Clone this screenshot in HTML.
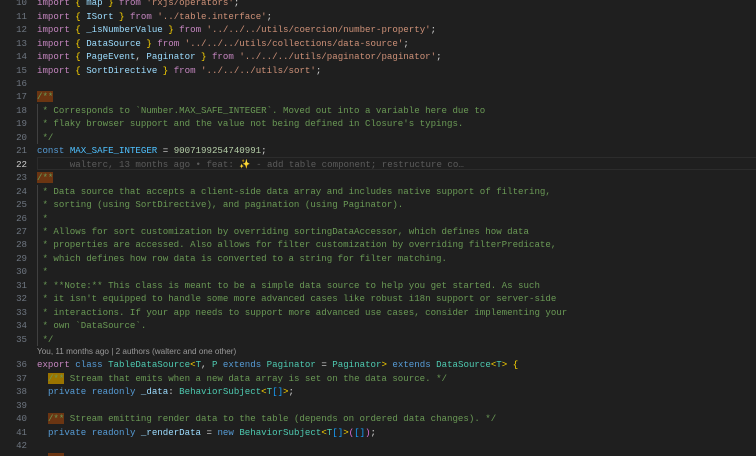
<!DOCTYPE html>
<html><head><meta charset="utf-8"><style>
html,body{margin:0;padding:0;background:#1f1f1f;width:756px;height:456px;overflow:hidden}
.l{position:absolute;left:0;height:13.45px;line-height:13.45px;font-family:"Liberation Mono",monospace;font-size:9.12px;white-space:pre;color:#d4d4d4;width:756px}
.n{position:absolute;left:0;width:27px;text-align:right;color:#6e7681}
.c{position:absolute;left:37px}
.k{color:#c586c0}.b{color:#ffd700}.v{color:#9cdcfe}.s{color:#ce9178}.cm{color:#6a9955}.bl{color:#569cd6}.cn{color:#4fc1ff}.nu{color:#b5cea8}.t{color:#4ec9b0}.p{color:#da70d6}.bb{color:#179fff}
.hb{background:#6b3512}.hy{background:#9a7400}
.g{position:absolute;left:37px;width:1px;background:#404040}
</style></head><body>
<div class="l" style="top:-3.7px"><span class="n">10</span><span class="c"><span class="k">import</span> <span class="b">{</span> <span class="v">map</span> <span class="b">}</span> <span class="k">from</span> <span class="s">'rxjs/operators'</span>;</span></div>
<div class="l" style="top:9.75px"><span class="n">11</span><span class="c"><span class="k">import</span> <span class="b">{</span> <span class="v">ISort</span> <span class="b">}</span> <span class="k">from</span> <span class="s">'../table.interface'</span>;</span></div>
<div class="l" style="top:23.2px"><span class="n">12</span><span class="c"><span class="k">import</span> <span class="b">{</span> <span class="v">_isNumberValue</span> <span class="b">}</span> <span class="k">from</span> <span class="s">'../../../utils/coercion/number-property'</span>;</span></div>
<div class="l" style="top:36.65px"><span class="n">13</span><span class="c"><span class="k">import</span> <span class="b">{</span> <span class="v">DataSource</span> <span class="b">}</span> <span class="k">from</span> <span class="s">'../../../utils/collections/data-source'</span>;</span></div>
<div class="l" style="top:50.1px"><span class="n">14</span><span class="c"><span class="k">import</span> <span class="b">{</span> <span class="v">PageEvent</span>, <span class="v">Paginator</span> <span class="b">}</span> <span class="k">from</span> <span class="s">'../../../utils/paginator/paginator'</span>;</span></div>
<div class="l" style="top:63.55px"><span class="n">15</span><span class="c"><span class="k">import</span> <span class="b">{</span> <span class="v">SortDirective</span> <span class="b">}</span> <span class="k">from</span> <span class="s">'../../../utils/sort'</span>;</span></div>
<div class="l" style="top:77px"><span class="n">16</span></div>
<div class="l" style="top:90.45px"><span class="n">17</span><span class="c cm"><span class="hb">/**</span></span></div>
<div class="l" style="top:103.9px"><span class="n">18</span><span class="c cm"> * Corresponds to `Number.MAX_SAFE_INTEGER`. Moved out into a variable here due to</span></div>
<div class="l" style="top:117.35px"><span class="n">19</span><span class="c cm"> * flaky browser support and the value not being defined in Closure's typings.</span></div>
<div class="l" style="top:130.8px"><span class="n">20</span><span class="c cm"> */</span></div>
<div class="l" style="top:144.25px"><span class="n">21</span><span class="c"><span class="bl">const</span> <span class="cn">MAX_SAFE_INTEGER</span> = <span class="nu">9007199254740991</span>;</span></div>
<div style="position:absolute;left:37px;top:157.2px;width:719px;height:12.5px;border:1px solid #2c2c2c;border-right:none;box-sizing:border-box"></div>
<div class="l" style="top:157.7px"><span class="n" style="color:#ccc">22</span><span class="c" style="color:#5c5c5c">      walterc, 13 months ago • feat: <span style="color:#a88c3a">✨</span> - add table component; restructure co…</span></div>
<div class="l" style="top:171.15px"><span class="n">23</span><span class="c cm"><span class="hb">/**</span></span></div>
<div class="l" style="top:184.6px"><span class="n">24</span><span class="c cm"> * Data source that accepts a client-side data array and includes native support of filtering,</span></div>
<div class="l" style="top:198.05px"><span class="n">25</span><span class="c cm"> * sorting (using SortDirective), and pagination (using Paginator).</span></div>
<div class="l" style="top:211.5px"><span class="n">26</span><span class="c cm"> *</span></div>
<div class="l" style="top:224.95px"><span class="n">27</span><span class="c cm"> * Allows for sort customization by overriding sortingDataAccessor, which defines how data</span></div>
<div class="l" style="top:238.4px"><span class="n">28</span><span class="c cm"> * properties are accessed. Also allows for filter customization by overriding filterPredicate,</span></div>
<div class="l" style="top:251.85px"><span class="n">29</span><span class="c cm"> * which defines how row data is converted to a string for filter matching.</span></div>
<div class="l" style="top:265.3px"><span class="n">30</span><span class="c cm"> *</span></div>
<div class="l" style="top:278.75px"><span class="n">31</span><span class="c cm"> * **Note:** This class is meant to be a simple data source to help you get started. As such</span></div>
<div class="l" style="top:292.2px"><span class="n">32</span><span class="c cm"> * it isn't equipped to handle some more advanced cases like robust i18n support or server-side</span></div>
<div class="l" style="top:305.65px"><span class="n">33</span><span class="c cm"> * interactions. If your app needs to support more advanced use cases, consider implementing your</span></div>
<div class="l" style="top:319.1px"><span class="n">34</span><span class="c cm"> * own `DataSource`.</span></div>
<div class="l" style="top:332.55px"><span class="n">35</span><span class="c cm"> */</span></div>
<div style="position:absolute;left:37px;top:347px;font-family:'Liberation Sans',sans-serif;font-size:8.2px;color:#999;white-space:pre">You, 11 months ago | 2 authors (walterc and one other)</div>
<div class="l" style="top:358.3px"><span class="n">36</span><span class="c"><span class="k">export</span> <span class="bl">class</span> <span class="t">TableDataSource</span><span class="b">&lt;</span><span class="t">T</span>, <span class="t">P</span> <span class="bl">extends</span> <span class="t">Paginator</span> = <span class="t">Paginator</span><span class="b">&gt;</span> <span class="bl">extends</span> <span class="t">DataSource</span><span class="b">&lt;</span><span class="t">T</span><span class="b">&gt;</span> <span class="b">{</span></span></div>
<div class="l" style="top:371.75px"><span class="n">37</span><span class="c cm">  <span class="hy">/**</span> Stream that emits when a new data array is set on the data source. */</span></div>
<div class="l" style="top:385.2px"><span class="n">38</span><span class="c">  <span class="bl">private</span> <span class="bl">readonly</span> <span class="v">_data</span>: <span class="t">BehaviorSubject</span><span class="b">&lt;</span><span class="t">T</span><span class="bb">[]</span><span class="b">&gt;</span>;</span></div>
<div class="l" style="top:398.65px"><span class="n">39</span></div>
<div class="l" style="top:412.1px"><span class="n">40</span><span class="c cm">  <span class="hb">/**</span> Stream emitting render data to the table (depends on ordered data changes). */</span></div>
<div class="l" style="top:425.55px"><span class="n">41</span><span class="c">  <span class="bl">private</span> <span class="bl">readonly</span> <span class="v">_renderData</span> = <span class="bl">new</span> <span class="t">BehaviorSubject</span><span class="b">&lt;</span><span class="t">T</span><span class="bb">[]</span><span class="b">&gt;</span><span class="p">(</span><span class="bb">[]</span><span class="p">)</span>;</span></div>
<div class="l" style="top:439px"><span class="n">42</span></div>
<div style="position:absolute;left:48px;top:453px;width:16px;height:3px;background:#6b3512"></div>
<div class="g" style="top:103.9px;height:40px"></div>
<div class="g" style="top:184.6px;height:161px"></div>
</body></html>
